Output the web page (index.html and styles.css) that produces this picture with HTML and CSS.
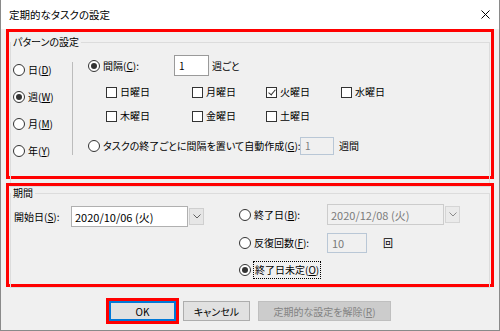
FILE: index.html
```html
<!DOCTYPE html>
<html lang="ja">

<head>
  <meta charset="UTF-8" />
  <meta name="viewport" content="width=device-width, initial-scale=1.0" />
  <title>定期的なタスクの設定</title>
  <link rel="stylesheet" href="styles.css">
</head>

<body>
  <div class="window">
    <div class="titlebar">
      <span class="title">定期的なタスクの設定</span>
      <svg class="close" width="9" height="9" viewBox="0 0 9 9">
        <path d="M0.5 0.5L8.5 8.5M8.5 0.5L0.5 8.5" stroke="#000" stroke-width="1" fill="none" />
      </svg>
    </div>

    <div class="content">
      <!-- パターンの設定 -->
      <div class="mark mark-pattern">
        <fieldset class="group group-pattern">
          <legend>パターンの設定</legend>
          <div class="pattern-body">
            <div class="freq">
              <label class="opt"><span class="radio"></span>日(<u>D</u>)</label>
              <label class="opt"><span class="radio on"></span>週(<u>W</u>)</label>
              <label class="opt"><span class="radio"></span>月(<u>M</u>)</label>
              <label class="opt"><span class="radio"></span>年(<u>Y</u>)</label>
            </div>
            <div class="divider"></div>
            <div class="weekly">
              <div class="row interval">
                <label class="opt opt-interval"><span class="radio on"></span>間隔(<u>C</u>):</label>
                <span class="textbox tb-interval">1</span>
                <span class="unit">週ごと</span>
              </div>
              <div class="days">
                <label class="check"><span class="box"></span>日曜日</label>
                <label class="check"><span class="box"></span>月曜日</label>
                <label class="check"><span class="box on"></span>火曜日</label>
                <label class="check"><span class="box"></span>水曜日</label>
                <label class="check"><span class="box"></span>木曜日</label>
                <label class="check"><span class="box"></span>金曜日</label>
                <label class="check"><span class="box"></span>土曜日</label>
              </div>
              <div class="row auto">
                <label class="opt opt-auto"><span class="radio"></span>タスクの終了ごとに間隔を置いて自動作成(<u>G</u>):</label>
                <span class="textbox disabled tb-weeks">1</span>
                <span class="unit unit-weeks">週間</span>
              </div>
            </div>
          </div>
        </fieldset>
      </div>

      <!-- 期間 -->
      <div class="mark mark-period">
        <fieldset class="group group-period">
          <legend>期間</legend>
          <div class="period-body">
            <div class="start">
              <span class="field-label">開始日(<u>S</u>):</span>
              <div class="combo">
                <span class="combo-field">2020/10/06 (火)</span>
                <span class="combo-btn"><svg width="8" height="5" viewBox="0 0 8 5"><path d="M0.5 0.5L4 4L7.5 0.5" stroke="#606060" fill="none" /></svg></span>
              </div>
            </div>
            <div class="end">
              <div class="row end-date">
                <label class="opt opt-end"><span class="radio"></span>終了日(<u>B</u>):</label>
                <div class="combo disabled">
                  <span class="combo-field">2020/12/08 (火)</span>
                  <span class="combo-btn"><svg width="8" height="5" viewBox="0 0 8 5"><path d="M0.5 0.5L4 4L7.5 0.5" stroke="#8a8a8a" fill="none" /></svg></span>
                </div>
              </div>
              <div class="row end-count">
                <label class="opt opt-end"><span class="radio"></span>反復回数(<u>F</u>):</label>
                <span class="textbox disabled tb-count">10</span>
                <span class="unit unit-count">回</span>
              </div>
              <div class="row end-none">
                <label class="opt"><span class="radio on"></span><span class="focus">終了日未定(<u>O</u>)</span></label>
              </div>
            </div>
          </div>
        </fieldset>
      </div>

      <!-- ボタン -->
      <div class="buttons">
        <div class="mark mark-ok">
          <button class="btn btn-default">OK</button>
        </div>
        <button class="btn btn-cancel">キャンセル</button>
        <button class="btn btn-clear" disabled>定期的な設定を解除(<u>R</u>)</button>
      </div>
    </div>
  </div>
</body>

</html>
```

FILE: styles.css
```css
body {
  margin: 0;
  padding: 0;
  font-family: "Noto Sans CJK JP", "Noto Sans", sans-serif;
  font-size: 10px;
  line-height: 16px;
  color: #000;
  font-feature-settings: "palt";
}

u {
  text-decoration: underline;
  text-underline-offset: 1px;
}

/* ウィンドウ */
.window {
  width: 500px;
  height: 331px;
  box-sizing: border-box;
  border: 1px solid #8a8a8a;
  border-top: none;
  background-color: #f0f0f0;
  overflow: hidden;
}

.titlebar {
  height: 29px;
  display: flex;
  align-items: center;
  justify-content: space-between;
  padding: 0 9px 0 8px;
  background-color: #fff;
}

.title {
  font-size: 10.5px;
}

.content {
  padding: 0 5px;
}

/* 赤枠 */
.mark {
  border: 3px solid #ff0000;
  box-sizing: border-box;
}

.mark-pattern {
  height: 150px;
}

.mark-period {
  height: 104px;
  margin-top: 4px;
}

/* グループボックス */
.group {
  margin: 0 1px;
  padding: 0;
  border: 1px solid #dcdcdc;
  min-width: 0;
}

.group legend {
  padding: 0 2px;
  line-height: 14px;
}

.group-pattern {
  margin-top: 3px;
  height: 150px;
}

.group-period {
  margin-top: 0;
  height: 100px;
}

/* ラジオボタン・チェックボックス */
.opt,
.check {
  display: flex;
  align-items: center;
  white-space: nowrap;
}

.radio {
  position: relative;
  width: 12px;
  height: 12px;
  box-sizing: border-box;
  border: 1px solid #333;
  border-radius: 50%;
  background-color: #fff;
  margin-right: 3px;
  flex: none;
}

.radio.on::after {
  content: "";
  position: absolute;
  left: 2px;
  top: 2px;
  width: 6px;
  height: 6px;
  border-radius: 50%;
  background-color: #333;
}

.box {
  position: relative;
  width: 11px;
  height: 11px;
  box-sizing: border-box;
  border: 1px solid #333;
  background-color: #fff;
  margin-right: 3px;
  flex: none;
}

.box.on::after {
  content: "";
  position: absolute;
  left: 3px;
  top: 0px;
  width: 3px;
  height: 6px;
  border: solid #333;
  border-width: 0 1px 1px 0;
  transform: rotate(40deg);
}

/* パターン */
.pattern-body {
  display: flex;
}

.freq {
  width: 59px;
  padding: 13px 0 0 2px;
  display: flex;
  flex-direction: column;
  gap: 11px;
}

.divider {
  width: 1px;
  height: 93px;
  margin-top: 13px;
  background-color: #bcbcbc;
}

.weekly {
  padding-left: 15px;
}

.row {
  display: flex;
  align-items: center;
}

.interval {
  height: 21px;
  margin-top: 6px;
}

.opt-interval {
  width: 86px;
}

.textbox {
  box-sizing: border-box;
  border: 1px solid #9a9a9a;
  background-color: #fff;
  padding-left: 4px;
  display: flex;
  align-items: center;
}

.textbox.disabled {
  border-color: #b9c7d6;
  background-color: #f0f0f0;
  color: #7a7a7a;
}

.tb-interval {
  width: 35px;
  height: 21px;
}

.unit {
  margin-left: 3px;
}

.days {
  display: grid;
  grid-template-columns: 86px 74px 75px auto;
  row-gap: 8px;
  margin: 8px 0 0 18px;
}

.auto {
  height: 18px;
  margin-top: 13px;
}

.opt-auto {
  width: 212px;
}

.tb-weeks {
  width: 34px;
  height: 18px;
}

.unit-weeks {
  margin-left: 5px;
}

/* 期間 */
.period-body {
  display: flex;
}

.start {
  width: 225px;
  padding-left: 3px;
  margin-top: 6px;
  display: flex;
  align-items: center;
  height: 21px;
}

.field-label {
  width: 57px;
}

.combo {
  display: flex;
  align-items: center;
  width: 133px;
  height: 21px;
}

.combo-field {
  flex: 1;
  height: 21px;
  box-sizing: border-box;
  border: 1px solid #b0b0b0;
  background-color: #fff;
  padding-left: 3px;
  display: flex;
  align-items: center;
  font-size: 11px;
}

.combo-btn {
  width: 15px;
  height: 17px;
  box-sizing: border-box;
  margin-left: 1px;
  border: 1px solid #cfcfcf;
  background-color: #e6e6e6;
  display: flex;
  align-items: center;
  justify-content: center;
}

.combo.disabled .combo-field {
  border-color: #cccccc;
  background-color: #f0f0f0;
  color: #7a7a7a;
}

.combo.disabled .combo-btn {
  background-color: #eaeaea;
  border-color: #d5d5d5;
}

.end {
  padding-top: 4px;
}

.opt-end {
  width: 88px;
}

.end-date {
  height: 21px;
}

.end-count {
  height: 20px;
  margin-top: 8px;
}

.tb-count {
  width: 40px;
  height: 20px;
  font-size: 11px;
}

.unit-count {
  margin-left: 16px;
}

.end-none {
  height: 16px;
  margin-top: 9px;
}

.focus {
  outline: 1px dotted #000;
  outline-offset: 0;
  padding: 0 1px;
}

/* ボタン */
.buttons {
  display: flex;
  align-items: center;
  margin: 11px 0 0 100px;
}

.mark-ok {
  display: flex;
}

.btn {
  height: 20px;
  box-sizing: border-box;
  font-family: "Noto Sans CJK JP", "Noto Sans", sans-serif;
  font-size: 10px;
  font-feature-settings: "palt";
  color: #000;
  background-color: #e1e1e1;
  border: 1px solid #adadad;
  padding: 0;
  margin: 0;
}

.btn-default {
  width: 67px;
  border-color: #0078d7;
  box-shadow: inset 0 0 0 1px #0078d7;
}

.btn-cancel {
  width: 67px;
  margin-left: 4px;
}

.btn-clear {
  width: 133px;
  margin-left: 8px;
  background-color: #cccccc;
  border-color: #bfbfbf;
  color: #838383;
}
```
